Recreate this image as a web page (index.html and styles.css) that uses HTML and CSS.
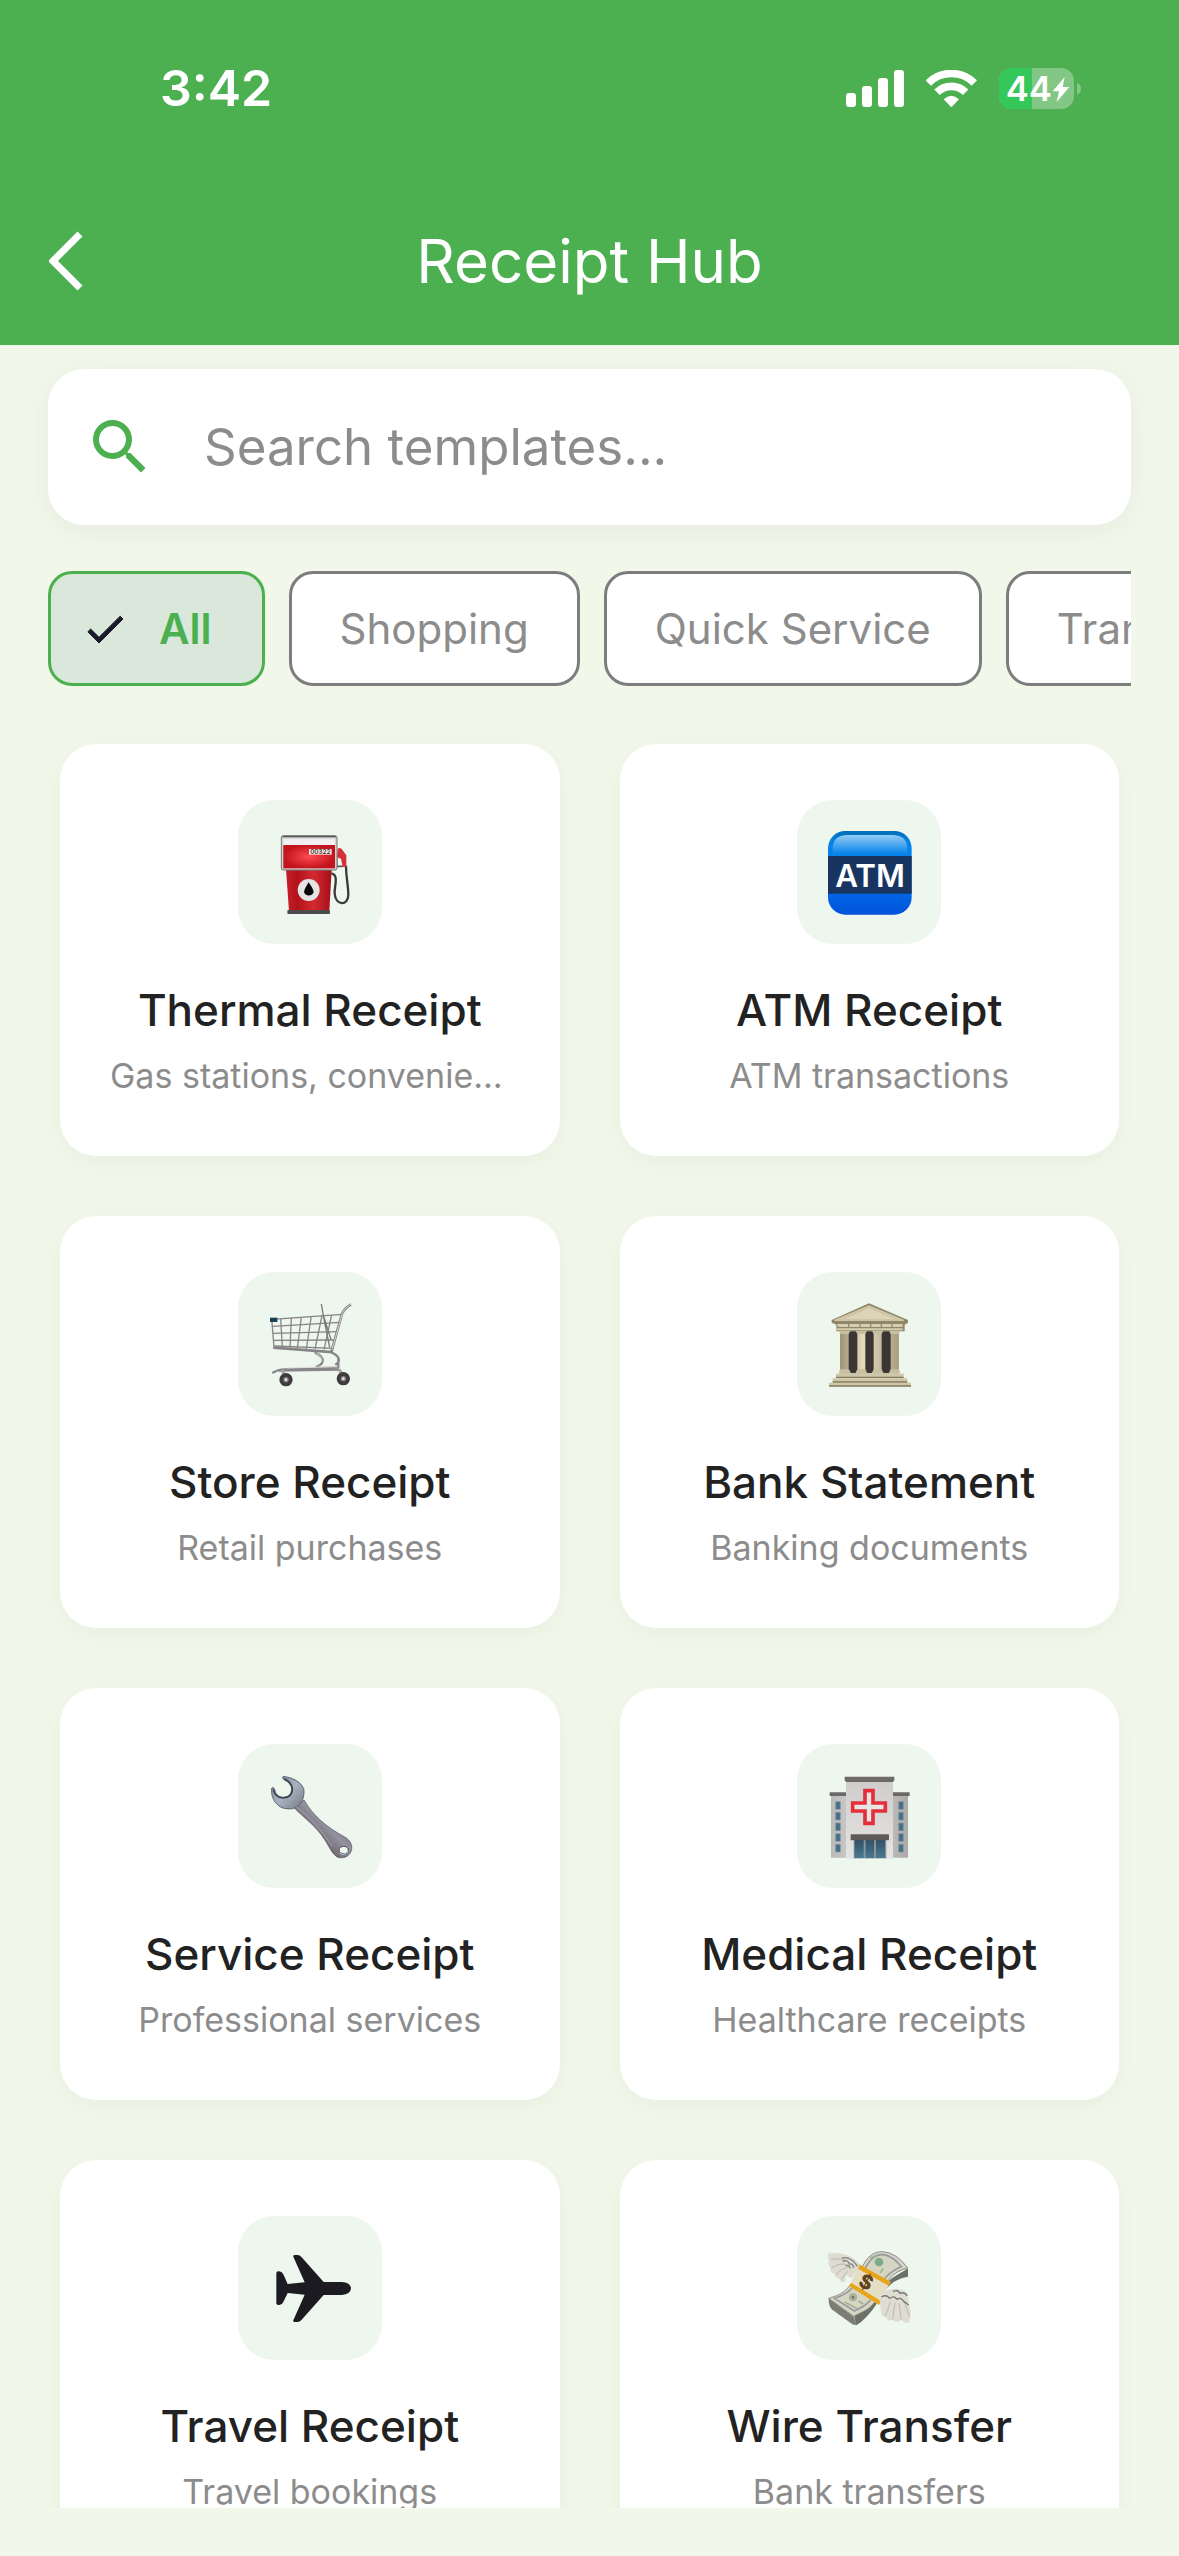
FILE: index.html
```html
<!DOCTYPE html>
<html lang="en">
<head>
<meta charset="utf-8">
<meta name="viewport" content="width=device-width, initial-scale=1">
<title>Receipt Hub</title>
<link rel="stylesheet" href="styles.css">
</head>
<body>
<header class="header">
  <div class="status">
    <span class="status-time">3:42</span>
    <div class="status-icons">
      <svg class="signal" viewBox="0 0 174 111" aria-hidden="true"><rect y="69" width="30" height="42" rx="9"/><rect x="48" y="48" width="30" height="63" rx="9"/><rect x="96" y="24" width="30" height="87" rx="9"/><rect x="144" width="30" height="111" rx="9"/></svg>
      <svg class="wifi" viewBox="318 57 153 111" aria-hidden="true"><path d="M325 96a98 98 0 0 1 138 0M351 124a61 61 0 0 1 86 0" fill="none" stroke="#fff" stroke-width="23"/><path d="M371 145q23-21 46 0l-20 21q-3 3-6 0z"/></svg>
      <svg class="battery" viewBox="537 51 246 123" aria-label="Battery 44 percent, charging"><rect x="537" y="51" width="225" height="123" rx="38" fill="#82c785"/><path d="M636 51h-61a38 38 0 0 0-38 38v47a38 38 0 0 0 38 38h61z" fill="#34c759"/><path d="M771 95q12 5 12 18t-12 18z" fill="#82c785"/><text x="557" y="150" class="battery-text">44</text><path d="M734 78l-36 43h19l-7 32 38-45h-20z"/></svg>
    </div>
  </div>
  <div class="nav">
    <button class="back" type="button" aria-label="Back"><svg viewBox="0 0 34 60" aria-hidden="true"><path d="M31 3L4 30l27 27" fill="none" stroke="#fff" stroke-width="7"/></svg></button>
    <h1 class="nav-title">Receipt Hub</h1>
  </div>
</header>

<label class="search">
  <svg class="search-icon" viewBox="0 0 24 24" aria-hidden="true"><path d="M15.5 14h-.79l-.28-.27A6.47 6.47 0 0 0 16 9.5 6.5 6.5 0 1 0 9.5 16c1.61 0 3.09-.59 4.23-1.57l.27.28v.79l5 4.99L20.49 19l-4.99-5zm-6 0C7.01 14 5 11.99 5 9.5S7.01 5 9.5 5 14 7.01 14 9.5 11.99 14 9.5 14z"/></svg>
  <input class="search-input" type="text" placeholder="Search templates..." aria-label="Search templates">
</label>

<div class="chips">
  <button class="chip chip-selected" type="button" aria-pressed="true"><svg class="chip-check" viewBox="0 0 24 24" aria-hidden="true"><path d="M9 16.17L4.83 12l-1.42 1.41L9 19 21 7l-1.41-1.41z"/></svg>All</button>
  <button class="chip" type="button">Shopping</button>
  <button class="chip" type="button">Quick Service</button>
  <button class="chip" type="button">Transport</button>
</div>

<main class="grid">
  <article class="card">
    <svg class="tile" viewBox="24 30 432 432" aria-hidden="true">
      <defs>
        <radialGradient id="pump-red"><stop offset="0" stop-color="#ff4a4f"/><stop offset="1" stop-color="#c3141d"/></radialGradient>
        <linearGradient id="pump-body"><stop offset="0" stop-color="#c9202a"/><stop offset=".25" stop-color="#b3121b"/><stop offset=".6" stop-color="#d42a31"/><stop offset="1" stop-color="#a50e18"/></linearGradient>
      </defs>
      <path d="M304 250c24 4 8 42 10 60 3 38 40 38 41 5 0-32-7-50-7-88" fill="none" stroke="#3a3a3c" stroke-width="7"/>
      <path d="M320 192v37h18" fill="none" stroke="#555" stroke-width="5"/>
      <path d="M323 176q10-6 16 6l10 14v35h-11l-5-25-12-4z" fill="#d5303a"/>
      <path d="M168 238h137l-7 126H177z" fill="url(#pump-body)"/>
      <rect x="172" y="360" width="128" height="12" rx="3" fill="#4c4c4c"/>
      <rect x="154" y="137" width="167" height="103" rx="6" fill="#d3d0d0" stroke="#777" stroke-width="3"/>
      <path d="M158 140h160" stroke="#555" stroke-width="4"/>
      <rect x="160" y="146" width="155" height="20" fill="#f1eff0"/>
      <rect x="160" y="165" width="155" height="70" fill="url(#pump-red)"/>
      <rect x="237" y="177" width="68" height="17" fill="#f7e7e5"/>
      <text x="271" y="192" class="pump-digits">00322</text>
      <circle cx="236" cy="300" r="33" fill="#e4e4e4"/>
      <path d="M236 277q-14 22-14 29a15 14 0 0 0 29 0q0-7-15-29z" fill="#080808"/>
    </svg>
    <h2 class="card-title">Thermal Receipt</h2>
    <p class="card-text">Gas stations, convenience stores</p>
  </article>

  <article class="card">
    <svg class="tile" viewBox="0 0 432 432" aria-hidden="true">
      <defs>
        <linearGradient id="atm-base" x2="0" y2="1"><stop offset="0" stop-color="#006cb5"/><stop offset=".12" stop-color="#0583e6"/><stop offset=".4" stop-color="#0683ee"/><stop offset=".75" stop-color="#0266e6"/><stop offset="1" stop-color="#0052dc"/></linearGradient>
        <linearGradient id="atm-shine" x2="0" y2="1"><stop offset="0" stop-color="#93cbf5"/><stop offset="1" stop-color="#0583e9"/></linearGradient>
      </defs>
      <rect x="93" y="93" width="251" height="251" rx="52" fill="url(#atm-base)"/>
      <path d="M107 162v-15q0-42 45-42h134q45 0 45 42v15z" fill="url(#atm-shine)"/>
      <rect x="93" y="168" width="251" height="113" fill="#173560"/>
      <text x="219" y="262" class="atm-text">ATM</text>
    </svg>
    <h2 class="card-title">ATM Receipt</h2>
    <p class="card-text">ATM transactions</p>
  </article>

  <article class="card">
    <svg class="tile" viewBox="24 22 432 432" aria-hidden="true" fill="none">
      <path d="M126 164l212-15M128 185l202-12M129 206l195-5M131 227l186-1M133 244l178 7" stroke="#868284" stroke-width="4"/>
      <path d="M125 160l7 89M152 162l5 86M184 160l-4 89M214 158l-12 93M244 154l-15 99M276 153l-21 100M305 151l-23 104" stroke="#8b8789" stroke-width="4"/>
      <path d="M274 118l7 40 18 90M282 158l21 67" stroke="#77797a" stroke-width="4"/>
      <path d="M363 119q-25 14-30 39l-29 104-174-13" stroke="#858386" stroke-width="8"/>
      <path d="M362 119q-24 14-28 38l-28 98" stroke="#d4d2d2" stroke-width="3"/>
      <path d="M254 263c37 18 26 38 3 42M304 263c35 16 22 31 12 38M127 325q18-12 40-11l158-6v-28M145 318l182-3" stroke="#88868a" stroke-width="7"/>
      <path d="M259 266c25 15 18 31-4 38M172 310l150-4" stroke="#e0dfdf" stroke-width="3"/>
      <path d="M157 316l10 28M328 314l12 28" stroke="#a8a6a7" stroke-width="10"/>
      <rect x="120" y="159" width="22" height="13" fill="#174154"/>
      <g fill="#8a8586" stroke="#403c3e" stroke-width="12"><circle cx="168" cy="345" r="14"/><circle cx="340" cy="342" r="14"/></g>
      <g fill="#e6e4e2"><circle cx="168" cy="345" r="4"/><circle cx="340" cy="342" r="4"/></g>
    </svg>
    <h2 class="card-title">Store Receipt</h2>
    <p class="card-text">Retail purchases</p>
  </article>

  <article class="card">
    <svg class="tile" viewBox="22 22 432 432" aria-hidden="true">
      <defs><linearGradient id="bank-column"><stop offset="0" stop-color="#9e9475"/><stop offset=".4" stop-color="#e5dcbf"/><stop offset="1" stop-color="#a99f80"/></linearGradient></defs>
      <path d="M238 116l117 50v8l-10 6v20H140v-20l-14-6v-8z" fill="#8f876a"/>
      <path d="M238 122l105 43v4H134v-4z" fill="#cfc6a7"/>
      <path d="M238 131l77 32H166z" fill="#ddd4b7"/>
      <path d="M143 178h196v9H143zM140 191h199v6H140z" fill="#d7ceaf"/>
      <path d="M152 200h174v126H152z" fill="#3b3533"/>
      <path d="M151 204h26v114h-26zM203 204h24v114h-24zM252 204h24v114h-24zM303 204h24v114h-24z" fill="url(#bank-column)"/>
      <path d="M148 198h34l-5 10h-26zM198 198h34l-5 10h-24zM247 198h34l-5 10h-24zM298 198h34l-5 10h-24zM146 326l6-12h26l6 12zM197 326l6-12h24l6 12zM246 326l6-12h24l6 12zM297 326l6-12h24l6 12z" fill="#c9bf9f"/>
      <path d="M145 184v6M177 178v9M211 178v9M243 178v9M275 178v9M307 178v9" stroke="#948b6d" stroke-width="4"/>
      <path d="M139 327h203v11H139zM129 341h224v11H129zM118 354h246v11H118z" fill="#d0c6a5"/>
      <path d="M139 336h203v4H139zM129 350h224v4H129zM118 362h246v4H118z" fill="#81795f"/>
    </svg>
    <h2 class="card-title">Bank Statement</h2>
    <p class="card-text">Banking documents</p>
  </article>

  <article class="card">
    <svg class="tile" viewBox="24 14 432 432" aria-hidden="true">
      <defs>
        <linearGradient id="wrench-handle" x1="0" y1="1" x2="1" y2="0"><stop offset=".25" stop-color="#594b53"/><stop offset=".55" stop-color="#93929f"/><stop offset="1" stop-color="#606471"/></linearGradient>
        <linearGradient id="wrench-head" x2="1" y2="1"><stop offset="0" stop-color="#74869a"/><stop offset=".5" stop-color="#a9b2c1"/><stop offset="1" stop-color="#777986"/></linearGradient>
      </defs>
      <path d="M193 206l29-24c28 47 64 79 122 111 37 20 22 67-16 62-19-4-28-30-44-54-26-41-55-59-91-95z" fill="url(#wrench-handle)" stroke="#514d56" stroke-width="2"/>
      <path d="M160 111q47 7 61 36c6 39-20 67-50 61-26 0-50-27-46-61q4-6 8 1 4 25 27 26 26-2 25-26-1-16-22-26-9-6-3-11z" fill="url(#wrench-head)" stroke="#5c6471" stroke-width="3"/>
      <path d="M130 150q5 25 29 26 29-2 28-29-2-18-24-29" fill="none" stroke="#39444e" stroke-width="5"/>
      <path d="M199 202c40 30 77 71 108 119" fill="none" stroke="#a6a7b2" stroke-width="4" opacity=".6"/>
      <ellipse cx="341" cy="332" rx="14" ry="11" fill="#edf7ee" stroke="#514a51" stroke-width="3"/>
      <path d="M329 341q12 10 25-5" fill="none" stroke="#c7dbea" stroke-width="3"/>
    </svg>
    <h2 class="card-title">Service Receipt</h2>
    <p class="card-text">Professional services</p>
  </article>

  <article class="card">
    <svg class="tile" viewBox="22 14 432 432" aria-hidden="true">
      <defs>
        <linearGradient id="wing-wall"><stop offset="0" stop-color="#bcbbbb"/><stop offset=".5" stop-color="#d7d5d4"/><stop offset="1" stop-color="#aaa8a8"/></linearGradient>
        <linearGradient id="main-wall" x2="0" y2="1"><stop offset="0" stop-color="#cfcdcc"/><stop offset="1" stop-color="#e6e4e3"/></linearGradient>
        <linearGradient id="door-glass" x2="0" y2="1"><stop offset="0" stop-color="#315166"/><stop offset="1" stop-color="#497995"/></linearGradient>
      </defs>
      <path d="M124 165h46v190h-46zM309 165h46v190h-46z" fill="url(#wing-wall)"/>
      <path d="M120 159h50v11h-50zM310 159h50v11h-50z" fill="#6b6968"/>
      <rect x="169" y="118" width="141" height="240" fill="url(#main-wall)"/>
      <path d="M165 112h149v12l-5 4H170l-5-4z" fill="#6d6a68"/>
      <path d="M138 187h14v23h-14zM138 219h14v23h-14zM138 251h14v23h-14zM138 283h14v23h-14zM138 315h14v23h-14zM327 187h14v23h-14zM327 219h14v23h-14zM327 251h14v23h-14zM327 283h14v23h-14zM327 315h14v23h-14z" fill="#42718c" stroke="#8d9496" stroke-width="2"/>
      <path d="M226 154h24v37h37v24h-37v37h-24v-37h-37v-24h37z" fill="#e8e6e4" stroke="#e42f3b" stroke-width="11"/>
      <rect x="192" y="300" width="98" height="57" fill="#879397"/>
      <path d="M195 302h27v54h-27zM228 302h25v54h-25zM259 302h27v54h-27z" fill="url(#door-glass)"/>
      <rect x="183" y="285" width="115" height="18" rx="2" fill="#5e5c5a"/>
    </svg>
    <h2 class="card-title">Medical Receipt</h2>
    <p class="card-text">Healthcare receipts</p>
  </article>

  <article class="card">
    <svg class="tile" viewBox="0 0 432 432" aria-hidden="true"><path d="M115 171q0-5 6-5 10-1 15 9l13 29 51-5-34-77q-2-5 5-5h8q6 0 12 7l66 74h54q27 2 28 19-1 18-28 20h-54l-66 74q-6 7-12 7h-8q-7 0-5-5l34-77-51-5-13 27q-5 11-15 9-6 0-6-5z" fill="#1c1b22"/></svg>
    <h2 class="card-title">Travel Receipt</h2>
    <p class="card-text">Travel bookings</p>
  </article>

  <article class="card">
    <svg class="tile" viewBox="22 22 432 432" aria-hidden="true">
      <path d="M193 320c31-17 54-20 88-81 19-34 46-40 74-60v25c-39 8-52 19-73 48-22 34-41 71-82 98z" fill="#6b7069"/>
      <path d="M117 269l76 56 8 25-13-3-62-45q-10-12-9-33z" fill="#7b7d75"/>
      <path d="M117 269c36-12 44-12 76-54 31-42 35-85 85-86q42 2 76 49c-49 12-64 43-84 79-27 47-43 48-78 66z" fill="#d5d5c2" stroke="#8b8c84" stroke-width="3"/>
      <path d="M134 269c36-12 50-21 76-62 26-46 37-70 71-69q28 4 54 36c-41 15-59 46-77 77-24 39-34 41-64 56z" fill="none" stroke="#9997a0" stroke-width="5"/>
      <circle cx="268" cy="160" r="13" fill="#7dab8d"/><circle cx="190" cy="266" r="12" fill="#a9b09e"/><circle cx="190" cy="266" r="4" fill="#717068"/>
      <path d="M241 148l20-8M281 179l-9 13M165 280l38 20M206 277l15 9" stroke="#a2b394" stroke-width="5"/>
      <path d="M207 167l95 52-34 70-89-56z" fill="#e4dfc4"/>
      <path d="M209 167l94 52-6 12-96-53zM184 222l90 55-6 12-90-57z" fill="#e8a51a"/>
      <text x="229" y="241" class="cash-sign" transform="rotate(27 229 221)">$</text>
      <path d="M118 134q34-4 60 7 28 14 32 30l-25 37-16-8-3 20q-12 3-16-9-13-2-15-15-16-3-13-20-10-10-4-19-7-16 0-23z" fill="#dedbd1"/>
      <path d="M124 152q29-6 53 6M126 178q23-17 45-10M139 198q15-19 34-22M155 212l19-25" fill="none" stroke="#b8b6ad" stroke-width="3"/>
      <path d="M157 148q18-4 34 10l13 15M159 158q16-6 20 8 12-2 13 12M168 172q12-5 14 8" fill="none" stroke="#858580" stroke-width="4"/>
      <path d="M269 267q20-31 58-26 27 4 27 19 2 18 7 37 4 22-1 42-14 10-25-6-14 14-26 0-14 8-19-7-14 1-16-19z" fill="#dfddd2"/>
      <path d="M288 321l14-42M309 332l7-50M335 333l-7-50M359 323l-15-45" fill="none" stroke="#bcbab0" stroke-width="3"/>
      <path d="M275 265q16-9 25 4 12-10 22 3 12-8 21 7l14 10M310 249q14-8 21 5 13-6 22 8" fill="none" stroke="#777873" stroke-width="4"/>
    </svg>
    <h2 class="card-title">Wire Transfer</h2>
    <p class="card-text">Bank transfers</p>
  </article>
</main>
</body>
</html>
```
FILE: styles.css
```css
* { box-sizing: border-box; }

body {
  margin: 0;
  height: 100vh;
  display: flex;
  flex-direction: column;
  overflow: hidden;
  padding-bottom: 48px;
  background: #f1f8e9;
  color: #222;
  font-family: Inter, "Liberation Sans", sans-serif;
}

button, input { font: inherit; }

.header {
  flex: none;
  background: #4caf50;
  color: #fff;
}

.status {
  display: flex;
  align-items: center;
  justify-content: space-between;
  height: 176px;
  padding: 0 98px 0 160px;
}

.status-time {
  font-size: 50px;
  font-weight: 600;
  line-height: 60px;
}

.status-icons {
  display: flex;
  align-items: center;
  gap: 22px;
  fill: #fff;
}

.signal { width: 58px; height: 37px; }
.wifi { width: 51px; height: 37px; }
.battery { width: 82px; height: 41px; }

.battery-text {
  font-size: 104px;
  font-weight: 600;
}

.nav {
  display: grid;
  grid-template-columns: 1fr auto 1fr;
  align-items: center;
  height: 169px;
  padding: 0 49px;
}

.back {
  justify-self: start;
  padding: 0;
  border: 0;
  background: none;
}

.back svg {
  display: block;
  width: 34px;
  height: 60px;
}

.nav-title {
  margin: 0;
  font-size: 60px;
  font-weight: 400;
  line-height: 80px;
}

.search {
  flex: none;
  display: flex;
  align-items: center;
  gap: 48px;
  height: 156px;
  margin: 24px 48px 0;
  padding: 0 36px;
  border-radius: 36px;
  background: #fff;
  box-shadow: 0 6px 30px rgba(0, 0, 0, .05);
}

.search-icon {
  flex: none;
  width: 72px;
  height: 72px;
  fill: #4caf50;
}

.search-input {
  flex: 1;
  min-width: 0;
  padding: 0;
  border: 0;
  outline: 0;
  background: none;
  font-size: 51px;
  line-height: 60px;
}

.search-input::placeholder {
  color: #8c8c8c;
  opacity: 1;
}

.chips {
  flex: none;
  display: flex;
  gap: 24px;
  margin: 46px 48px 0;
  overflow: hidden;
}

.chip {
  flex: none;
  display: flex;
  align-items: center;
  gap: 30px;
  height: 115px;
  padding: 0 48px;
  border: 3px solid #7d7d7d;
  border-radius: 24px;
  background: #fff;
  color: #8c8c8c;
  font-size: 42px;
  line-height: 60px;
}

.chip-selected {
  padding: 0 50px 0 30px;
  border-color: #4caf50;
  background: #d9e8db;
  color: #4caf50;
  font-weight: 600;
}

.chip-check {
  width: 48px;
  height: 48px;
  fill: #1c1b2c;
  stroke: #1c1b2c;
  stroke-width: .5;
}

.grid {
  flex: 1;
  min-height: 0;
  display: grid;
  grid-template-columns: 1fr 1fr;
  grid-auto-rows: max-content;
  gap: 60px;
  margin: 0 48px;
  padding: 58px 12px 0;
  overflow: hidden;
}

.card {
  display: flex;
  flex-direction: column;
  align-items: center;
  min-width: 0;
  padding: 56px 50px;
  border-radius: 36px;
  background: #fff;
  box-shadow: 0 6px 24px rgba(0, 0, 0, .04);
}

.tile {
  width: 144px;
  height: 144px;
  border-radius: 36px;
  background: #edf7ee;
}

.card-title,
.card-text {
  max-width: 100%;
  overflow: hidden;
  text-overflow: ellipsis;
  white-space: nowrap;
}

.card-title {
  margin: 36px 0 12px;
  font-size: 44px;
  font-weight: 500;
  line-height: 60px;
}

.card-text {
  margin: 0;
  color: #8c8c8c;
  font-size: 34px;
  line-height: 48px;
}

.pump-digits {
  font-size: 19px;
  font-weight: 600;
  text-anchor: middle;
  fill: #4a3735;
}

.atm-text {
  font-size: 94px;
  font-weight: 600;
  text-anchor: middle;
  fill: #fff;
}

.cash-sign {
  font-size: 59px;
  font-weight: 800;
  text-anchor: middle;
  fill: #624316;
}
```
